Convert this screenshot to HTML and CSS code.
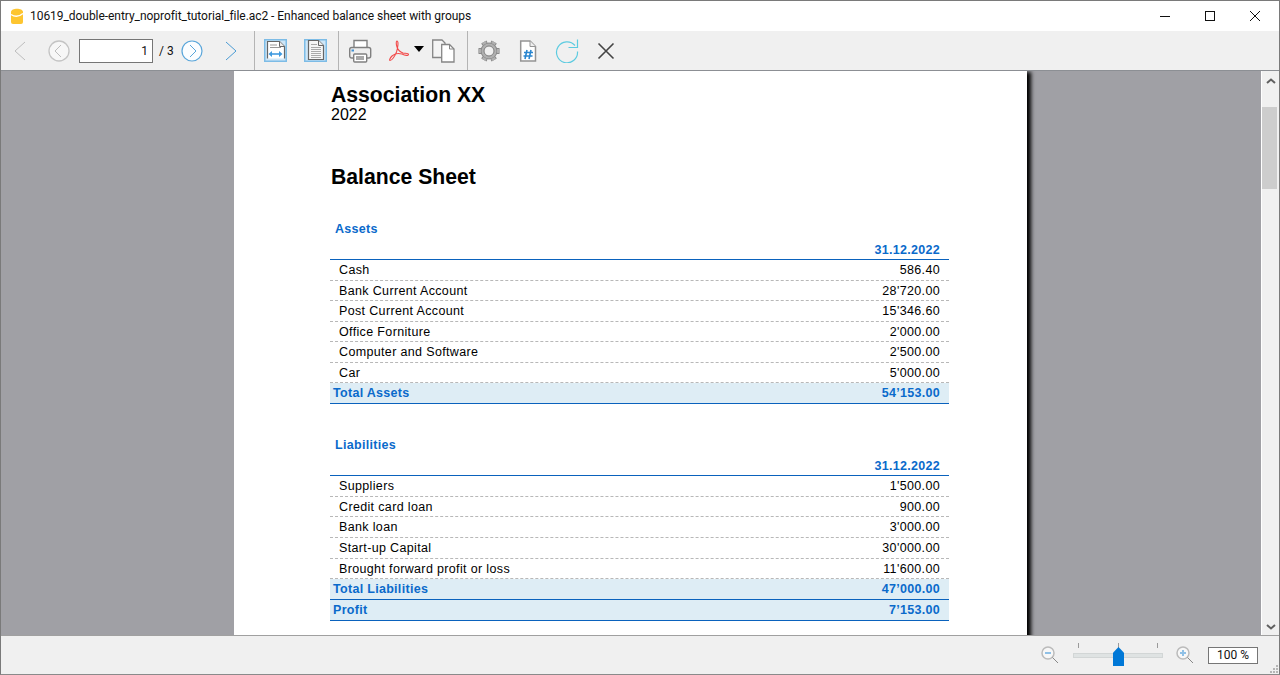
FILE: index.html
```html
<!DOCTYPE html>
<html>
    <head>
        <title>Enhanced balance sheet with groups</title>
        <link rel="stylesheet" href="styles.css">
    </head>

    <body>
        <div class="window">
            <div class="title_bar">
                <svg class="app_icon" width="14" height="16" viewBox="0 0 14 16">
                    <path d="M1 4 C1 -0.5 13 -0.5 13 4 V14 Q13 16 11 16 H3 Q1 16 1 14 Z" fill="#fdc530"/>
                    <path d="M1 6.5 Q7 10.5 13 5.5" stroke="#fff" stroke-width="1.4" fill="none"/>
                </svg>
                <div class="title_text">10619_double-entry_noprofit_tutorial_file.ac2 - Enhanced balance sheet with groups</div>
                <div class="win_buttons">
                    <svg width="12" height="12" viewBox="0 0 12 12"><path d="M1 6.5 H11" stroke="#111" fill="none"/></svg>
                    <svg width="12" height="12" viewBox="0 0 12 12"><rect x="1.5" y="1.5" width="9" height="9" stroke="#111" fill="none"/></svg>
                    <svg width="12" height="12" viewBox="0 0 12 12"><path d="M1 1 L11 11 M11 1 L1 11" stroke="#111" fill="none"/></svg>
                </div>
            </div>

            <div class="toolbar">
                <div class="tool_group nav_group">
                    <svg class="tool" width="14" height="20" viewBox="0 0 14 20"><path d="M12 1 L2 10 L12 19" stroke="#bdbdbd" fill="none"/></svg>
                    <svg class="tool round_prev" width="22" height="22" viewBox="0 0 22 22"><circle cx="11" cy="11" r="10" stroke="#c4c4c4" stroke-width="1.3" fill="#f7f7f7"/><path d="M13 5 L7 11 L13 17" stroke="#bdbdbd" fill="none"/></svg>
                    <div class="page_box">1</div>
                    <div class="page_count">/ 3</div>
                    <svg class="tool" width="22" height="22" viewBox="0 0 22 22"><circle cx="11" cy="11" r="10" stroke="#5aa6da" stroke-width="1.2" fill="#fbfdff"/><path d="M9 5 L15 11 L9 17" stroke="#5aa6da" fill="none"/></svg>
                    <svg class="tool next" width="14" height="20" viewBox="0 0 14 20"><path d="M2 1 L12 10 L2 19" stroke="#4a9bd4" fill="none"/></svg>
                </div>
                <div class="tool_group view_group">
                    <svg width="23" height="23" viewBox="0 0 23 23">
                        <rect x="0.75" y="0.75" width="21.5" height="21.5" fill="#cfe6f7" stroke="#7dbce6" stroke-width="1.5"/>
                        <path d="M3.5 19.5 V2.5 H15.5 L20.5 7.5 V19.5" fill="#fff" stroke="#666" stroke-width="1.2"/>
                        <path d="M15.5 2.5 V7.5 H20.5" fill="#eee" stroke="#666"/>
                        <path d="M6 6 H13 M6 8.5 H17" stroke="#999"/>
                        <path d="M6 15 H17" stroke="#3f9ae0" stroke-width="1.6"/>
                        <path d="M8 12 L4.5 15 L8 18 Z M15 12 L18.5 15 L15 18 Z" fill="#3f9ae0"/>
                    </svg>
                    <svg width="23" height="23" viewBox="0 0 23 23">
                        <rect x="0.75" y="0.75" width="21.5" height="21.5" fill="#cfe6f7" stroke="#7dbce6" stroke-width="1.5"/>
                        <path d="M4.5 1.5 H14.5 L19.5 6.5 V20.5 H4.5 Z" fill="#f6f6f6" stroke="#666" stroke-width="1.2"/>
                        <path d="M14.5 1.5 V6.5 H19.5" fill="#eee" stroke="#666"/>
                        <path d="M7 5.5 H13 M7 8.5 H17 M7 10.5 H17 M7 12.5 H17 M7 14.5 H17 M7 16.5 H17 M7 18.5 H17" stroke="#aaa"/>
                    </svg>
                </div>
                <div class="tool_group export_group">
                    <svg width="24" height="24" viewBox="0 0 24 24">
                        <path d="M6 9 V1.5 H19 V9" fill="#fff" stroke="#808080" stroke-width="1.4"/>
                        <rect x="1.7" y="8.5" width="21" height="10.5" rx="2" fill="#eeeeee" stroke="#808080" stroke-width="1.4"/>
                        <rect x="3.5" y="10.5" width="2.5" height="2" fill="#3f8fd2"/>
                        <rect x="5.7" y="15" width="13" height="8" rx="1" fill="#fff" stroke="#808080" stroke-width="1.4"/>
                        <rect x="8" y="17" width="8" height="4" fill="#a8a8a8"/>
                    </svg>
                    <svg class="pdf" width="22" height="22" viewBox="0 0 22 22">
                        <path d="M9 1 C8 1 8 4 9 7 C10 10 12 12 15 13 C17 13.5 20.5 13 20.5 14.5 C20.5 16 17 15.5 14 14 C10 13 6 14 4 16 C2 18 1 20.5 2 20.5 C4 20.5 7 16 8.5 12 C9.5 9 11 1 9 1 Z" fill="none" stroke="#f24a4a" stroke-width="1.1"/>
                    </svg>
                    <svg class="caret" width="10" height="6" viewBox="0 0 10 6"><path d="M0 0 H10 L5 6 Z" fill="#000"/></svg>
                    <svg width="24" height="24" viewBox="0 0 24 24">
                        <path d="M1.7 1 H11 L14 4 V18.5 H1.7 Z" fill="#f4f4f4" stroke="#858585" stroke-width="1.3"/>
                        <path d="M10.7 5.5 H18.5 L23 10 V23 H10.7 Z" fill="#fff" stroke="#858585" stroke-width="1.3"/>
                        <path d="M18.5 5.5 V10 H23" fill="none" stroke="#858585"/>
                    </svg>
                </div>
                <div class="tool_group setup_group">
                    <svg width="24" height="24" viewBox="0 0 24 24">
                        <g stroke="#8a8a8a" stroke-width="6" fill="none">
                            <path d="M20 12 H22.5 M16 18.9 L17.2 21 M8 18.9 L6.8 21 M4 12 H1.5 M8 5.1 L6.8 3 M16 5.1 L17.2 3"/>
                        </g>
                        <circle cx="12" cy="12" r="8.5" fill="#8a8a8a"/>
                        <g stroke="#b0b0b0" stroke-width="4" fill="none">
                            <path d="M20 12 H22.5 M16 18.9 L17.2 21 M8 18.9 L6.8 21 M4 12 H1.5 M8 5.1 L6.8 3 M16 5.1 L17.2 3"/>
                        </g>
                        <circle cx="12" cy="12" r="7.5" fill="#b0b0b0"/>
                        <circle cx="12" cy="12" r="5" fill="#f0f0f0" stroke="#808080"/>
                    </svg>
                    <svg width="18" height="22" viewBox="0 0 18 22">
                        <path d="M1.7 1 H11 L16.5 6.5 V21 H1.7 Z" fill="#fff" stroke="#949494" stroke-width="1.5"/>
                        <path d="M11 1 V6.5 H16.5" fill="#eee" stroke="#949494"/>
                        <path d="M8 10 L6 19 M12 10 L10 19 M5 12.5 H14 M4.5 16 H13.5" stroke="#2a86d0" stroke-width="1.6"/>
                    </svg>
                    <svg width="24" height="24" viewBox="0 0 24 24">
                        <path d="M20 6.5 A10.5 10.5 0 1 0 22.5 12.5" fill="none" stroke="#5ccbe0" stroke-width="1.2"/>
                        <path d="M13.5 8.5 H22.5 V0.5" fill="none" stroke="#5ccbe0" stroke-width="1.2"/>
                    </svg>
                    <svg width="18" height="18" viewBox="0 0 18 18"><path d="M1.5 1.5 L16.5 16.5 M16.5 1.5 L1.5 16.5" stroke="#444" stroke-width="1.6"/></svg>
                </div>
            </div>

            <div class="main">
                <div class="viewer">
                    <div class="page">
                        <div class="org">Association XX</div>
                        <div class="year">2022</div>
                        <div class="report_title">Balance Sheet</div>

                        <div class="section_title">Assets</div>
                        <div class="date_row">31.12.2022</div>
                        <div class="rows">
                            <div class="row"><span>Cash</span><span>586.40</span></div>
                            <div class="row"><span>Bank Current Account</span><span>28'720.00</span></div>
                            <div class="row"><span>Post Current Account</span><span>15'346.60</span></div>
                            <div class="row"><span>Office Forniture</span><span>2'000.00</span></div>
                            <div class="row"><span>Computer and Software</span><span>2'500.00</span></div>
                            <div class="row"><span>Car</span><span>5'000.00</span></div>
                            <div class="row total"><span>Total Assets</span><span>54’153.00</span></div>
                        </div>

                        <div class="section_title second">Liabilities</div>
                        <div class="date_row">31.12.2022</div>
                        <div class="rows tall">
                            <div class="row"><span>Suppliers</span><span>1'500.00</span></div>
                            <div class="row"><span>Credit card loan</span><span>900.00</span></div>
                            <div class="row"><span>Bank loan</span><span>3'000.00</span></div>
                            <div class="row"><span>Start-up Capital</span><span>30'000.00</span></div>
                            <div class="row"><span>Brought forward profit or loss</span><span>11'600.00</span></div>
                            <div class="row total"><span>Total Liabilities</span><span>47’000.00</span></div>
                            <div class="row total"><span>Profit</span><span>7’153.00</span></div>
                        </div>
                    </div>
                </div>
                <div class="scrollbar">
                    <svg width="10" height="6" viewBox="0 0 10 6"><path d="M1 5 L5 1.5 L9 5" stroke="#606060" stroke-width="2" fill="none"/></svg>
                    <div class="scroll_thumb"></div>
                    <svg class="scroll_down" width="10" height="6" viewBox="0 0 10 6"><path d="M1 1 L5 4.5 L9 1" stroke="#606060" stroke-width="2" fill="none"/></svg>
                </div>
            </div>

            <div class="status_bar">
                <svg width="18" height="18" viewBox="0 0 18 18">
                    <circle cx="7" cy="7" r="6" fill="#f7f7f7" stroke="#bbb" stroke-width="1.5"/>
                    <path d="M4 7 H10" stroke="#8fc0e6" stroke-width="2"/>
                    <path d="M11.5 11.5 L17 17" stroke="#888"/>
                </svg>
                <div class="zoom_slider">
                    <div class="tick_row"><i></i><i></i><i></i></div>
                    <div class="slider_track"></div>
                    <div class="slider_thumb"></div>
                </div>
                <svg width="18" height="18" viewBox="0 0 18 18">
                    <circle cx="7" cy="7" r="6" fill="#f7f7f7" stroke="#bbb" stroke-width="1.5"/>
                    <path d="M4 7 H10 M7 4 V10" stroke="#8fc0e6" stroke-width="2"/>
                    <path d="M11.5 11.5 L17 17" stroke="#888"/>
                </svg>
                <div class="zoom_box">100 %</div>
                <svg class="grip" width="10" height="10" viewBox="0 0 10 10"><path d="M7 1 H9 V3 H7 Z M4 4 H6 V6 H4 Z M7 4 H9 V6 H7 Z M1 7 H3 V9 H1 Z M4 7 H6 V9 H4 Z M7 7 H9 V9 H7 Z" fill="#b5b5b5"/></svg>
            </div>
        </div>
    </body>
</html>
```
FILE: styles.css
```css
html, body {
    margin: 0;
    height: 100%;
    overflow: hidden;
}

.window {
    box-sizing: border-box;
    width: 1280px;
    height: 675px;
    display: flex;
    flex-direction: column;
    border: 1px solid #7a7a7a;
    border-bottom-color: #8a8a8a;
    background-color: white;
    font-family: "Roboto", sans-serif;
    color: #111;
}

.title_bar {
    height: 30px;
    flex: none;
    display: flex;
    align-items: center;
    padding-left: 9px;
    background-color: white;
}

.app_icon {
    margin-right: 6px;
}

.title_text {
    font-size: 12px;
    letter-spacing: -0.05px;
    white-space: nowrap;
}

.win_buttons {
    margin-left: auto;
    display: flex;
    gap: 33px;
    padding-right: 18px;
}

.toolbar {
    height: 39px;
    flex: none;
    display: flex;
    align-items: stretch;
    background-color: #f0f0f0;
    border-bottom: 1px solid #8c8f94;
}

.tool_group {
    display: flex;
    align-items: center;
    border-right: 1px solid #b4b4b4;
}

.nav_group {
    width: 254px;
    padding-left: 12px;
    box-sizing: border-box;
}

.round_prev {
    margin-left: 21px;
}

.page_box {
    box-sizing: border-box;
    width: 74px;
    height: 24px;
    margin-left: 9px;
    padding: 4px 4px 0 0;
    text-align: right;
    font-size: 12px;
    background-color: white;
    border: 1px solid #767676;
}

.page_count {
    font-size: 12px;
    width: 22px;
    margin-left: 6px;
}

.next {
    margin-left: 21px;
}

.view_group {
    width: 84px;
    box-sizing: border-box;
    padding-left: 9px;
    gap: 17px;
}

.export_group {
    width: 129px;
    box-sizing: border-box;
    padding-left: 9px;
}

.pdf {
    margin-left: 16px;
}

.caret {
    margin-left: 4px;
    margin-right: 7px;
    margin-bottom: 3px;
}

.setup_group {
    border-right: none;
    padding-left: 9px;
    gap: 18px;
}

.main {
    flex: 1;
    min-height: 0;
    display: flex;
    background-color: #a0a0a5;
}

.viewer {
    flex: 1;
    min-width: 0;
    overflow: hidden;
    display: flex;
    justify-content: center;
}

.page {
    box-sizing: border-box;
    width: 793px;
    height: 900px;
    margin-left: -1px;
    padding: 12px 78px 0 96px;
    background-color: white;
    box-shadow: 5px 0 4px -1px #000;
    font-family: "Liberation Sans", sans-serif;
}

.org {
    padding-left: 1px;
    font-size: 21.2px;
    font-weight: bold;
    line-height: 24px;
    color: #000;
}

.year {
    padding-left: 1px;
    font-size: 16px;
    line-height: 16px;
    color: #000;
}

.report_title {
    margin-top: 41px;
    padding-left: 1px;
    font-size: 21.2px;
    font-weight: bold;
    line-height: 26px;
    color: #000;
}

.section_title {
    margin-top: 31px;
    padding-left: 5px;
    font-size: 12.5px;
    font-weight: bold;
    line-height: 16px;
    letter-spacing: 0.3px;
    color: #0a6acb;
}

.section_title.second {
    margin-top: 33px;
}

.date_row {
    margin-top: 5px;
    height: 17px;
    padding-right: 9px;
    text-align: right;
    font-size: 12.5px;
    font-weight: bold;
    line-height: 16px;
    letter-spacing: 0.3px;
    color: #0a6acb;
}

.rows {
    border-top: 1px solid #0a62bd;
}

.row {
    box-sizing: border-box;
    height: 20.57px;
    display: flex;
    justify-content: space-between;
    align-items: center;
    padding: 0.5px 9px 0;
    font-size: 12.5px;
    letter-spacing: 0.35px;
    color: #000;
    border-bottom: 1px dashed #b8b8b8;
}

.rows.tall .row {
    height: 20.7px;
}

.row.total {
    padding-left: 3px;
    font-weight: bold;
    letter-spacing: 0.3px;
    color: #0a6acb;
    background-color: #deedf5;
    border-bottom: 1px solid #0a62bd;
}

.scrollbar {
    box-sizing: border-box;
    width: 18px;
    flex: none;
    display: flex;
    flex-direction: column;
    align-items: center;
    padding-top: 7px;
    background-color: #f0f0f0;
    border-left: 1px solid #fff;
}

.scroll_thumb {
    align-self: flex-start;
    width: 15px;
    height: 82px;
    margin-top: 23px;
    background-color: #cdcdcd;
}

.scroll_down {
    margin-top: auto;
    margin-bottom: 5px;
}

.status_bar {
    position: relative;
    height: 39px;
    flex: none;
    box-sizing: border-box;
    display: flex;
    align-items: center;
    padding-left: 1040px;
    background-color: #f0f0f0;
    border-top: 1px solid #a0a0a0;
}

.zoom_slider {
    position: relative;
    width: 90px;
    height: 24px;
    margin: 0 13px 0 14px;
}

.tick_row {
    display: flex;
    justify-content: space-between;
    padding: 0 5px;
}

.tick_row i {
    width: 1px;
    height: 5px;
    background-color: #9a9a9a;
}

.slider_track {
    height: 3px;
    margin-top: 5px;
    background-color: #dfe3e3;
    border: 1px solid #d2d6d6;
}

.slider_thumb {
    position: absolute;
    left: 40px;
    top: 4px;
    width: 11px;
    height: 19px;
    background-color: #0078d7;
    clip-path: polygon(50% 0, 100% 30%, 100% 100%, 0 100%, 0 30%);
}

.zoom_box {
    box-sizing: border-box;
    width: 50px;
    height: 17px;
    margin-left: 14px;
    text-align: center;
    font-size: 12px;
    line-height: 15px;
    background-color: white;
    border: 1px solid #767676;
}

.grip {
    position: absolute;
    right: 0;
    bottom: 0;
}
```
